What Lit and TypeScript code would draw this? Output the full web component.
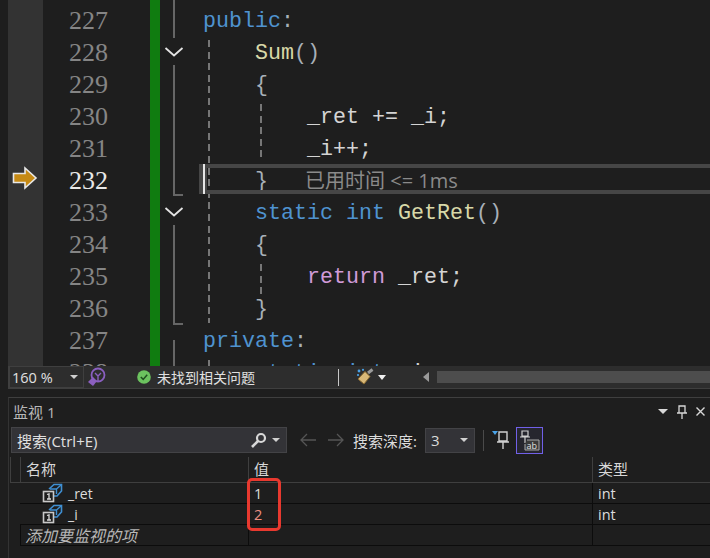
import { LitElement, html, css, svg } from "lit";
import { customElement } from "lit/decorators.js";

type Tok = [string, string];
const lines: { n: number; toks: Tok[]; cur?: boolean }[] = [
  { n: 227, toks: [["kw", "public"], ["dim", ":"]] },
  { n: 228, toks: [["p", "    "], ["fn", "Sum"], ["dim", "()"]] },
  { n: 229, toks: [["dim", "    {"]] },
  { n: 230, toks: [["p", "        _ret += _i;"]] },
  { n: 231, toks: [["p", "        _i++;"]] },
  { n: 232, toks: [["p", "    "], ["dim", "}"]], cur: true },
  { n: 233, toks: [["p", "    "], ["kw", "static int"], ["p", " "], ["fn", "GetRet"], ["dim", "()"]] },
  { n: 234, toks: [["dim", "    {"]] },
  { n: 235, toks: [["p", "        "], ["ctl", "return"], ["p", " _ret;"]] },
  { n: 236, toks: [["dim", "    }"]] },
  { n: 237, toks: [["kw", "private"], ["dim", ":"]] },
  { n: 238, toks: [["p", "    "], ["kw", "static int"], ["p", " _i"]] },
];

const varIcon = svg`<svg width="21" height="20" viewBox="0 0 21 20" class="vicon">
  <path d="M7 6 L12 1.5 H19.5 V8 L15 13 H9" fill="none" stroke="#3f8fd2" stroke-width="1.6"/>
  <path d="M8 6 H14.5 V11 M14.5 6 L19 2" fill="none" stroke="#3f8fd2" stroke-width="1.4"/>
  <rect x="1.5" y="8.5" width="10" height="10" fill="#1e1e1e" stroke="#c8c8c8" stroke-width="1.6"/>
  <path d="M5 11.5 L7 10.8 V16 M5 16 H9" fill="none" stroke="#dcdcdc" stroke-width="1.3"/>
</svg>`;

@customElement("app-root")
export class AppRoot extends LitElement {
  static styles = css`
    :host { display: flex; flex-direction: column; width: 710px; height: 558px; overflow: hidden; background: #1e1e1e; position: relative; font-family: "Open Sans", "Noto Sans CJK SC", sans-serif; color: #dcdcdc; font-size: 14px; }
    .editor { height: 366px; position: relative; overflow: hidden; padding-top: 5px; box-sizing: border-box; flex: none; }
    .margin { position: absolute; left: 8px; top: 0; bottom: 0; width: 35px; background: #333333; }
    .row { height: 32px; display: flex; align-items: center; font-family: "Liberation Mono", monospace; font-size: 21.67px; white-space: pre; position: relative; }
    .num { width: 108px; text-align: right; color: #858585; flex: none; font-family: "Liberation Serif", serif; font-size: 26px; line-height: 32px; }
    .num.cur { color: #e8e8e8; }
    .code { margin-left: 95px; color: #d4d4d4; }
    .kw { color: #4f93d0; } .fn { color: #d8d8a8; } .ctl { color: #d09ad8; } .dim { color: #a8b0b8; } .p { color: #d4d4d4; }
    .green { position: absolute; left: 150px; width: 10px; top: 0; bottom: 0; background: #107c10; }
    .arrow { position: absolute; left: 12px; top: 166px; }
    .fold { position: absolute; left: 173px; width: 2px; background: #666666; }
    .foldh { position: absolute; left: 173px; width: 10px; height: 2px; background: #666666; }
    .chev { position: absolute; left: 164px; }
    .guide { position: absolute; width: 2px; background: repeating-linear-gradient(to bottom, #777777 0 7px, transparent 7px 11.6px); }
    .curbox { position: absolute; left: 204px; right: 0; top: 164px; height: 30px; border-top: 4px solid #464646; border-bottom: 4px solid #464646; box-sizing: border-box; pointer-events: none; }
    .caretg { position: absolute; left: 199px; top: 164px; width: 8px; height: 30px; background: #464646; }
    .caret { position: absolute; left: 203px; top: 164px; width: 2px; height: 30px; background: #e6e6e6; }
    .hint { position: absolute; left: 305px; top: 168px; font-size: 20px; color: #8a8a8a; line-height: 26px; font-family: "Open Sans", "Noto Sans CJK SC", sans-serif; white-space: pre; }

    .status { height: 23px; margin-left: 8px; background: #2d2d2d; border-bottom: 1px solid #3f3f3f; display: flex; align-items: center; flex: none; box-sizing: border-box; position: relative; font-size: 14px; }
    .zoom { width: 76px; height: 22px; box-sizing: border-box; border: 1px solid #3f3f3f; border-left: 2px solid #3f3f3f; display: flex; align-items: center; justify-content: space-between; padding: 0 5px 0 2px; font-size: 14.5px; color: #e0e0e0; }
    .tri { width: 0; height: 0; border-left: 4px solid transparent; border-right: 4px solid transparent; border-top: 4px solid #d0d0d0; display: inline-block; }
    .ok { margin-left: 30px; display: flex; align-items: center; gap: 6px; color: #e0e0e0; }
    .sep { width: 1px; height: 17px; background: #c8c8c8; margin-left: 83px; }
    .brush { margin-left: 17px; }
    .btri { margin-left: 4px; border-left-width: 4.5px; border-right-width: 4.5px; border-top: 5px solid #f0f0f0; }
    .hbar { flex: 1; height: 12px; background: #4d4d4d; margin-left: 8px; }
    .ltri { width: 0; height: 0; border-top: 5px solid transparent; border-bottom: 5px solid transparent; border-right: 6px solid #9a9a9a; margin-left: 37px; }

    .panel { margin-left: 8px; margin-top: 8px; border-top: 1px solid #3f3f3f; border-left: 1px solid #333333; flex: 1; display: flex; flex-direction: column; }
    .ptitle { height: 29px; display: flex; align-items: center; justify-content: space-between; padding: 0 5px 2px 4px; box-sizing: border-box; color: #b8b8b8; font-size: 15px; flex: none; }
    .pbtns { display: flex; align-items: center; gap: 9px; }
    .ttri { border-left-width: 5px; border-right-width: 5px; border-top: 5px solid #d8d8d8; }
    .tools { height: 26px; display: flex; align-items: center; padding-left: 2px; flex: none; font-size: 15px; }
    .search { width: 276px; height: 26px; box-sizing: border-box; background: #333337; border: 1px solid #434346; display: flex; align-items: center; justify-content: space-between; padding: 0 6px 0 5px; color: #e0e0e0; }
    .searchr { display: flex; align-items: center; gap: 5px; }
    .arrows { display: flex; gap: 10px; margin-left: 13px; margin-right: 9px; }
    .depth { width: 50px; height: 25px; box-sizing: border-box; background: #333337; border: 1px solid #434346; display: flex; align-items: center; justify-content: space-between; padding: 0 6px 0 5px; margin-left: 8px; }
    .vsep { width: 1px; height: 21px; background: #4a4a4a; margin: 0 8px; }
    .sel { width: 27px; height: 27px; box-sizing: border-box; border: 1px solid #7160e8; margin-left: 5px; display: flex; align-items: center; justify-content: center; background: #26262e; }
    .table { margin-top: 4px; margin-left: 1px; display: grid; grid-template-columns: 10px 228px 344px 1fr; grid-template-rows: 26px repeat(3, 21px); flex: none; font-size: 14.5px; }
    .cell { display: flex; align-items: center; padding-left: 5px; box-sizing: border-box; border-bottom: 1px solid #0c0c0c; white-space: nowrap; }
    .gut { padding: 0; border-bottom: none; }
    .head { border-bottom: 1px solid #3f3f3f; color: #d8d8d8; border-left: 1px solid #3f3f3f; font-size: 15px; padding-bottom: 2px; }
    .b { border-left: 1px solid #0c0c0c; }
    .name { padding-left: 22px; gap: 5px; font-size: 14px; }
    .add { font-style: italic; color: #b8b8b8; border-left: 1px solid #0c0c0c; padding-left: 4px; font-size: 16px; }
    .changed { color: #ec8f82; }
    .mark { position: absolute; left: 247px; top: 478px; width: 34px; height: 53px; box-sizing: border-box; border: 3px solid #e8392f; border-radius: 5px; pointer-events: none; }
  `;

  private chev(top: number) {
    return html`<svg class="chev" style="top:${top}px" width="20" height="12" viewBox="0 0 20 12"><path d="M1.5 2 L10 9.5 L18.5 2" fill="none" stroke="#e4e4e4" stroke-width="1.8"/></svg>`;
  }

  private geo(cls: string, left: number, top: number, height: number) {
    return html`<div class=${cls} style="left:${left}px;top:${top}px;height:${height}px"></div>`;
  }

  render() {
    return html`
      <div class="editor">
        <div class="margin"></div>
        ${lines.map(l => html`<div class="row"><span class="num ${l.cur ? "cur" : ""}">${l.n}</span><span class="code">${l.toks.map(t => html`<span class=${t[0]}>${t[1]}</span>`)}</span></div>`)}
        <div class="green"></div>
        <svg class="arrow" width="26" height="24" viewBox="0 0 26 24"><path d="M1.5 7.5 H13 V2 L24 12 L13 22 V16.5 H1.5 Z" fill="#c68a14" stroke="#e8e8e8" stroke-width="1.6"/></svg>
        ${this.geo("fold", 173, 0, 38)}
        ${this.chev(46)}
        ${this.geo("fold", 173, 65, 130)}
        <div class="foldh" style="top:194px"></div>
        ${this.chev(206)}
        ${this.geo("fold", 173, 225, 99)}
        <div class="foldh" style="top:323px"></div>
        ${this.geo("fold", 173, 340, 30)}
        ${this.geo("guide", 208, 40, 283)}
        ${this.geo("guide", 208, 360, 8)}
        ${this.geo("guide", 260, 104, 56)}
        ${this.geo("guide", 260, 264, 30)}
        <div class="curbox"></div>
        <div class="caretg"></div>
        <div class="caret"></div>
        <div class="hint">已用时间 &lt;= 1ms</div>
      </div>
      <div class="status">
        <div class="zoom"><span>160 %</span><span class="tri"></span></div>
        <svg style="margin-left:3px" width="20" height="20" viewBox="0 0 20 20"><circle cx="11" cy="8" r="6.5" fill="none" stroke="#8a5fc0" stroke-width="1.8"/><path d="M11 14 V8 M8 6 L11 9 L14 6" fill="none" stroke="#8a5fc0" stroke-width="1.4"/><path d="M1 15 L6 10 L10 14 L6 19 Z" fill="#8b5fbf"/></svg>
        <div class="ok"><svg width="14" height="14" viewBox="0 0 14 14"><circle cx="7" cy="7" r="6.8" fill="#6cc35f"/><path d="M3.8 7 L6.2 9.4 L10.2 4.8" fill="none" stroke="#1f4f1f" stroke-width="1.5"/></svg><span>未找到相关问题</span></div>
        <div class="sep"></div>
        <svg class="brush" width="18" height="18" viewBox="0 0 18 18"><path d="M16.5 1.5 L12 5" stroke="#9a9a9a" stroke-width="3"/><path d="M9 3.5 L14 8.5 L8 16 L2 11 Z" fill="#d8b878" stroke="#8a6a30"/><circle cx="3" cy="3" r="1.4" fill="#4aa3e8"/><circle cx="7" cy="1.8" r="1.1" fill="#4aa3e8"/><circle cx="2" cy="7" r="1.1" fill="#4aa3e8"/></svg>
        <span class="tri btri"></span>
        <div class="ltri"></div>
        <div class="hbar"></div>
      </div>
      <div class="panel">
        <div class="ptitle"><span>监视 1</span>
          <div class="pbtns"><span class="tri ttri"></span>
            <svg width="10" height="14" viewBox="0 0 10 14"><path d="M2 1 H8 V8 H2 Z M0 8 H10 M5 8 V14" fill="none" stroke="#d8d8d8" stroke-width="1.3"/></svg>
            <svg width="9" height="9" viewBox="0 0 9 9"><path d="M0.5 0.5 L8.5 8.5 M8.5 0.5 L0.5 8.5" stroke="#d8d8d8" stroke-width="1.4"/></svg></div></div>
        <div class="tools">
          <div class="search"><span>搜索(Ctrl+E)</span><span class="searchr"><svg width="17" height="17" viewBox="0 0 17 17"><circle cx="11" cy="6" r="4" fill="none" stroke="#d8d8d8" stroke-width="2.2"/><path d="M8 9 L2 15" stroke="#d8d8d8" stroke-width="2.6"/></svg><span class="tri"></span></span></div>
          <div class="arrows">
            <svg width="17" height="14" viewBox="0 0 17 14"><path d="M16 7 H1 M7 1 L1 7 L7 13" fill="none" stroke="#555" stroke-width="1.3"/></svg>
            <svg width="17" height="14" viewBox="0 0 17 14"><path d="M1 7 H16 M10 1 L16 7 L10 13" fill="none" stroke="#555" stroke-width="1.3"/></svg>
          </div>
          <span>搜索深度:</span>
          <div class="depth"><span>3</span><span class="tri"></span></div>
          <div class="vsep"></div>
          <svg width="19" height="20" viewBox="0 0 19 20"><path d="M0 1 H6 L3 5 Z" fill="#4aa3e8"/><path d="M7 2 H15 V11 H7 Z M5 12 H17 M11 12 V19" fill="none" stroke="#d0d0d0" stroke-width="1.4"/></svg>
          <div class="sel"><svg width="23" height="23" viewBox="0 0 23 23"><path d="M4 2 H10 V7 H4 Z M2 8 H12 M7 8 V14" fill="none" stroke="#d0d0d0" stroke-width="1.2"/><path d="M9 11 H21 V21 H7 V15" fill="#3a3a3a" stroke="#a8a8a8"/><text x="8.5" y="19.5" font-size="9" font-family="Open Sans" fill="#e0e0e0">ab</text></svg></div>
        </div>
        <div class="table">
          <div class="cell gut head"></div><div class="cell head">名称</div><div class="cell head">值</div><div class="cell head">类型</div>
          <div class="cell gut"></div><div class="cell name">${varIcon}<span>_ret</span></div><div class="cell b">1</div><div class="cell b">int</div>
          <div class="cell gut"></div><div class="cell name">${varIcon}<span>_i</span></div><div class="cell b changed">2</div><div class="cell b">int</div>
          <div class="cell gut"></div><div class="cell add">添加要监视的项</div><div class="cell b"></div><div class="cell b"></div>
        </div>
      </div>
      <div class="mark"></div>
    `;
  }
}
